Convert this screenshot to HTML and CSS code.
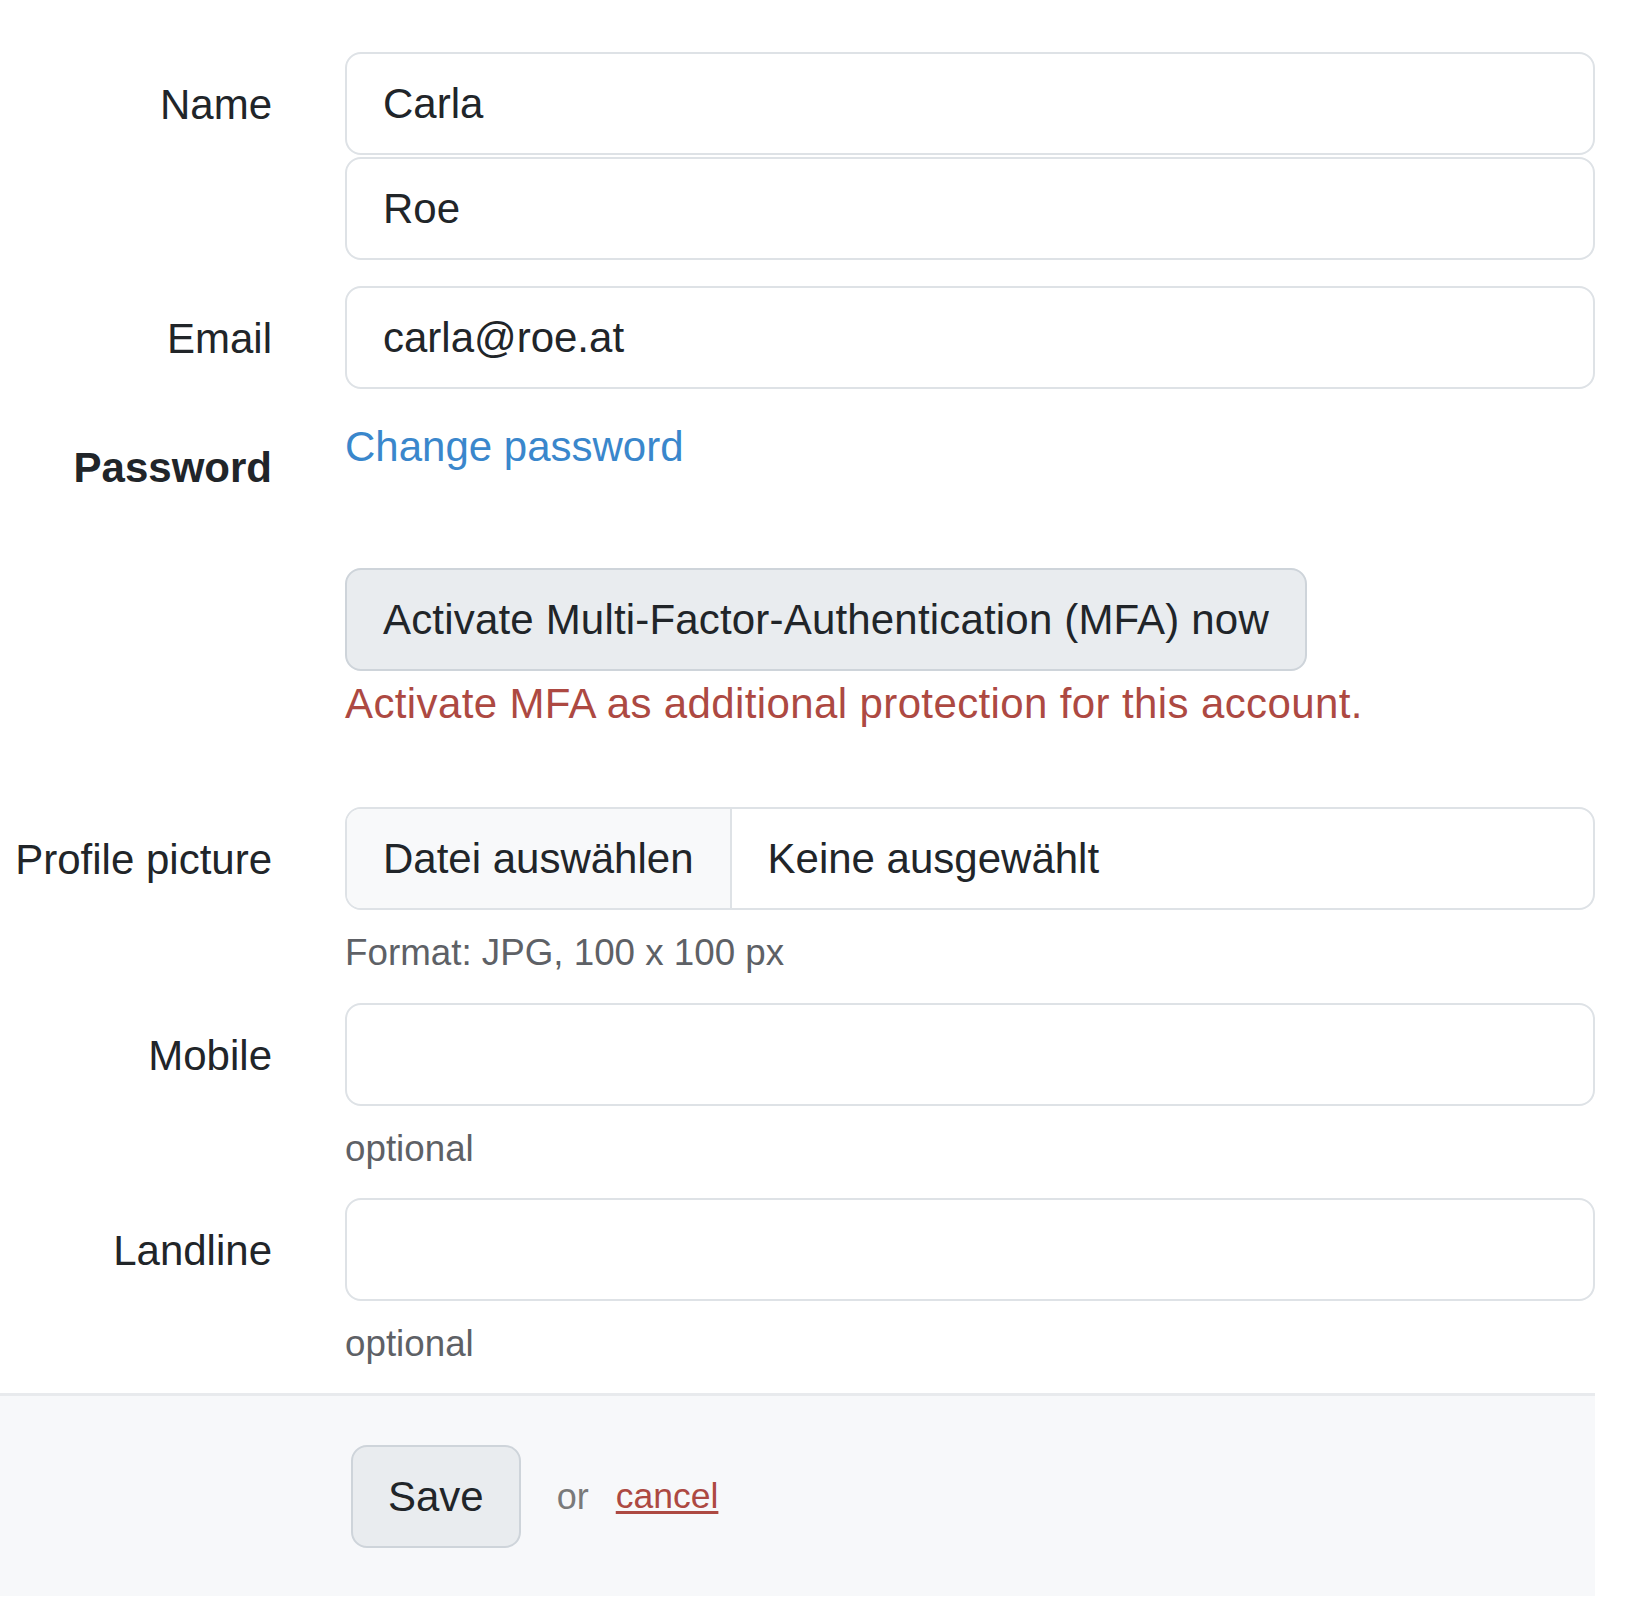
FILE: index.html
```html
<!DOCTYPE html>
<html lang="en">
<head>
<meta charset="utf-8">
<title>Edit profile</title>
<link rel="stylesheet" href="styles.css">
</head>
<body>
<form class="profile-form">
  <div class="fields">
    <div class="row row-name">
      <label class="row-label">Name</label>
      <div class="row-field">
        <input class="text-input" type="text" value="Carla">
        <input class="text-input text-input-stacked" type="text" value="Roe">
      </div>
    </div>

    <div class="row row-email">
      <label class="row-label">Email</label>
      <div class="row-field">
        <input class="text-input" type="text" value="carla@roe.at">
      </div>
    </div>

    <div class="row row-password">
      <label class="row-label row-label-strong">Password</label>
      <div class="row-field">
        <a class="link-primary" href="#">Change password</a>
        <div class="mfa">
          <button type="button" class="btn btn-mfa">Activate Multi-Factor-Authentication (MFA) now</button>
          <div class="mfa-note">Activate MFA as additional protection for this account.</div>
        </div>
      </div>
    </div>

    <div class="row row-help">
      <label class="row-label">Profile picture</label>
      <div class="row-field">
        <div class="file-input">
          <span class="file-button">Datei auswählen</span>
          <span class="file-name">Keine ausgewählt</span>
        </div>
        <div class="help">Format: JPG, 100 x 100 px</div>
      </div>
    </div>

    <div class="row row-help">
      <label class="row-label">Mobile</label>
      <div class="row-field">
        <input class="text-input" type="text" value="">
        <div class="help">optional</div>
      </div>
    </div>

    <div class="row row-last">
      <label class="row-label">Landline</label>
      <div class="row-field">
        <input class="text-input" type="text" value="">
        <div class="help">optional</div>
      </div>
    </div>
  </div>

  <div class="actions">
    <button type="button" class="btn btn-save">Save</button>
    <span class="actions-or">or</span>
    <a class="link-cancel" href="#">cancel</a>
  </div>
</form>
</body>
</html>
```

FILE: styles.css
```css
html, body {
  margin: 0;
  padding: 0;
  background: #ffffff;
}

body {
  font-family: "Liberation Sans", Arial, Helvetica, sans-serif;
  font-size: 42px;
  line-height: 63px;
  color: #212529;
}

.profile-form {
  margin: 0;
  padding-top: 52px;
}

.fields {
  margin-right: 43px;
}

/* label column + field column */
.row {
  display: grid;
  grid-template-columns: 272px 1fr;
  column-gap: 73px;
  align-items: start;
}

.row-name { margin-bottom: 26px; }
.row-email { margin-bottom: 26px; }
.row-password { margin-bottom: 72px; }
.row-help { margin-bottom: 22.5px; }
.row-last { margin-bottom: 22px; }

.row-label {
  display: block;
  text-align: right;
  padding-top: 21px;
  line-height: 63px;
  font-weight: 400;
  white-space: nowrap;
}

.row-label-strong {
  font-weight: 700;
}

.row-field {
  min-width: 0;
}

.text-input {
  display: block;
  box-sizing: border-box;
  width: 100%;
  height: 103px;
  margin: 0;
  padding: 0 36px;
  font-family: inherit;
  font-size: 42px;
  color: #212529;
  background: #ffffff;
  border: 2px solid #dee2e6;
  border-radius: 16px;
  outline: none;
}

.text-input-stacked {
  margin-top: 2px;
}

.link-primary {
  display: block;
  width: max-content;
  color: #3a87cc;
  text-decoration: none;
  line-height: 63px;
}

.mfa {
  margin-top: 90px;
}

.btn {
  display: inline-flex;
  align-items: center;
  box-sizing: border-box;
  height: 103px;
  margin: 0;
  padding: 0 36px;
  font-family: inherit;
  font-size: 42px;
  color: #212529;
  background: #e9ecef;
  border: 2px solid #ced4da;
  border-radius: 16px;
  cursor: pointer;
}

.btn-mfa {
  letter-spacing: 0.18px;
}

.mfa-note {
  color: #ad4942;
  line-height: 63px;
  margin-top: 1px;
  letter-spacing: 0.38px;
}

/* file picker drawn as a split control */
.file-input {
  display: flex;
  box-sizing: border-box;
  height: 103px;
  border: 2px solid #dee2e6;
  border-radius: 16px;
  overflow: hidden;
  background: #ffffff;
}

.file-button {
  display: flex;
  align-items: center;
  padding: 0 36px;
  background: #f8f9fa;
  border-right: 2px solid #dee2e6;
  white-space: nowrap;
}

.file-name {
  display: flex;
  align-items: center;
  padding: 0 36px;
  white-space: nowrap;
}

.help {
  margin-top: 15px;
  font-size: 36.75px;
  line-height: 55px;
  color: #5e6166;
}

/* footer bar with the form buttons */
.actions {
  display: flex;
  align-items: center;
  margin-right: 43px;
  padding: 49px 0 48px 351px;
  background: #f7f8fa;
  border-top: 3px solid #e8eaed;
}

.btn-save {
  padding: 0 35px;
}

.actions-or {
  margin-left: 36px;
  font-size: 36px;
  line-height: 55px;
  color: #7a7a7a;
}

.link-cancel {
  margin-left: 27px;
  font-size: 35.5px;
  line-height: 55px;
  color: #ad4942;
  text-decoration: underline;
  text-decoration-thickness: 3px;
  text-underline-offset: 3px;
}
```
